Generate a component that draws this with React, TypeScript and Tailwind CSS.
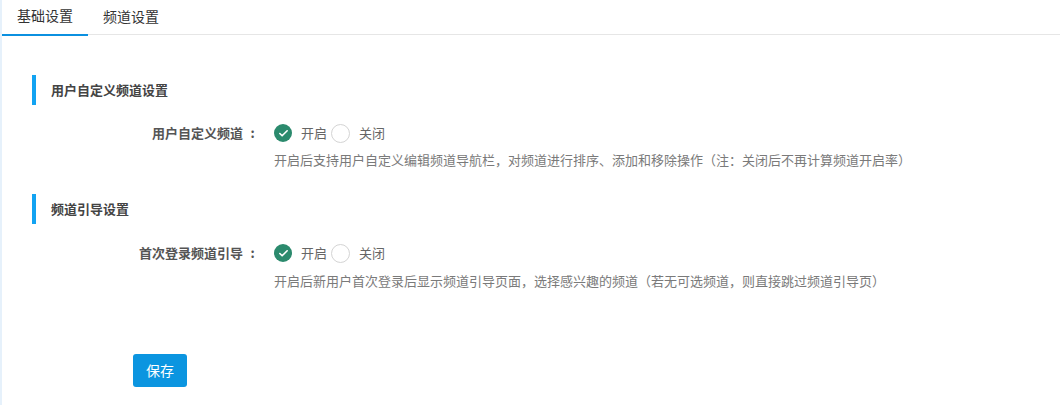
import { useState } from "react";
import { Check } from "lucide-react";

const font = { fontFamily: '"Noto Sans CJK SC", "Noto Sans", sans-serif' };

interface Setting {
  key: string;
  section: string;
  label: string;
  desc: string;
}

const settings: Setting[] = [
  {
    key: "custom",
    section: "用户自定义频道设置",
    label: "用户自定义频道",
    desc: "开启后支持用户自定义编辑频道导航栏，对频道进行排序、添加和移除操作（注：关闭后不再计算频道开启率）",
  },
  {
    key: "guide",
    section: "频道引导设置",
    label: "首次登录频道引导",
    desc: "开启后新用户首次登录后显示频道引导页面，选择感兴趣的频道（若无可选频道，则直接跳过频道引导页）",
  },
];

const Radio = ({ checked, text, onClick }: { checked: boolean; text: string; onClick: () => void }) => (
  <button onClick={onClick} className="flex items-center text-[13px] text-[#666]">
    {checked ? (
      <span className="w-[18px] h-[18px] rounded-full bg-[#2b8a6d] flex items-center justify-center">
        <Check size={11} strokeWidth={3.5} color="#fff" />
      </span>
    ) : (
      <span className="w-[19px] h-[19px] rounded-full border border-[#d4d4d4] bg-white" />
    )}
    <span className="ml-[9px] mr-[4px]">{text}</span>
  </button>
);

const App = () => {
  const [tab, setTab] = useState(0);
  const [values, setValues] = useState<Record<string, boolean>>({ custom: true, guide: true });

  return (
    <div className="flex min-h-screen bg-white" style={font}>
      <div className="w-[2px] bg-[#e6f1fb]" />
      <div className="flex-1 pr-[3px]">
        {/* Tabs */}
        <div className="h-[35px] border-b border-[#e6e6e6] flex">
          {["基础设置", "频道设置"].map((t, i) => (
            <button
              key={t}
              onClick={() => setTab(i)}
              className={`px-[15px] h-[36px] pb-[4px] flex items-center text-[14px] text-[#333] ${
                tab === i ? "border-b-2 border-[#0b90e0]" : ""
              }`}
            >
              {t}
            </button>
          ))}
        </div>

        <div className="pl-[30px] pt-[40px]">
          {settings.map((s, idx) => (
            <div key={s.key} className={idx > 0 ? "mt-[24px]" : ""}>
              <div className="h-[30px] border-l-4 border-[#12a3f2] pl-[15px] flex items-center text-[13px] font-bold text-[#444]">
                {s.section}
              </div>
              <div className={`${idx > 0 ? "mt-[19px]" : "mt-[18px]"} flex`}>
                <div className="w-[230px] flex justify-end text-[13px] font-bold text-[#555] leading-[20px]">
                  <span>{s.label}</span>
                  <span className="w-[19px] text-center">:</span>
                </div>
                <div className="ml-[12px]">
                  <div className="flex items-center h-[20px]">
                    <Radio
                      checked={values[s.key]}
                      text="开启"
                      onClick={() => setValues({ ...values, [s.key]: true })}
                    />
                    <Radio
                      checked={!values[s.key]}
                      text="关闭"
                      onClick={() => setValues({ ...values, [s.key]: false })}
                    />
                  </div>
                  <p
                    className={`${idx > 0 ? "mt-[8px]" : "mt-[7px]"} text-[13px] text-[#7a7a7a] leading-[20px]`}
                  >
                    {s.desc}
                  </p>
                </div>
              </div>
            </div>
          ))}

          <button className="mt-[63px] ml-[101px] w-[54px] h-[33px] rounded-[3px] bg-[#0b95e0] text-white text-[14px]">
            保存
          </button>
        </div>
      </div>
    </div>
  );
};

export default App;
